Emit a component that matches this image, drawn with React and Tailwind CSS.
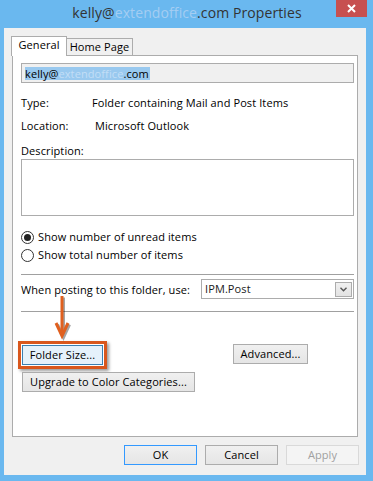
import React from 'react';

const font = { fontFamily: '"Open Sans", "Noto Sans", sans-serif' };

const Btn = ({ children, className = '' }) => (
  <div
    className={`h-[20px] flex items-center justify-center border border-[#acacac] bg-gradient-to-b from-[#f0f0f0] to-[#e5e5e5] text-[11px] tracking-[0.1px] text-[#000] whitespace-nowrap ${className}`}
  >
    {children}
  </div>
);

const Radio = ({ checked, label }) => (
  <div className="h-[16px] flex items-center gap-[4px]">
    <div className="w-[13px] h-[13px] rounded-full border border-[#333] bg-white flex items-center justify-center">
      {checked && <div className="w-[7px] h-[7px] rounded-full bg-[#222]" />}
    </div>
    <span className="leading-[16px]">{label}</span>
  </div>
);

export default function App() {
  return (
    <div className="w-[373px] h-[481px] bg-[#6ab8ef] flex flex-col overflow-hidden select-none" style={font}>
      {/* title bar */}
      <div className="relative h-[28px] flex items-center justify-center">
        <span className="text-[14px] tracking-[0.1px] text-[#333] leading-none pl-[1px] pb-[2px]">
          kelly@<span className="text-[#a4cdf2]">extendoffice</span>.com Properties
        </span>
        <div className="absolute right-[6px] top-0 w-[31px] h-[17px] bg-[#c75050] flex items-center justify-center">
          <svg width="9" height="9" viewBox="0 0 9 9">
            <path d="M1 1L8 8M8 1L1 8" stroke="#fff" strokeWidth="2" />
          </svg>
        </div>
      </div>

      {/* client */}
      <div className="relative flex-1 ml-[4px] mr-[7px] mb-[6px] bg-[#f0f0f0] flex flex-col text-[11px] tracking-[0.1px] text-[#000]">
        {/* tabs */}
        <div className="flex items-end pl-[7px] pt-[8px]">
          <div className="relative z-10 -mb-px w-[56px] h-[20px] bg-white border border-b-0 border-[#acacac] flex items-center justify-center pb-[2px]">
            General
          </div>
          <div className="w-[66px] h-[17px] bg-[#f0f0f0] border border-b-0 border-l-0 border-[#acacac] flex items-center justify-center">
            Home Page
          </div>
        </div>

        {/* panel */}
        <div className="ml-[8px] w-[346px] h-[382px] bg-white border border-[#acacac] pl-[8px] flex flex-col whitespace-nowrap">
          <div className="mt-[7px] w-[333px] h-[20px] bg-[#f0f0f0] border border-[#acacac] flex items-center pl-[3px]">
            <span className="bg-[#99c9ef] h-[13px] flex items-center leading-none pr-px">
              kelly@<span className="text-[#c2def6]">extendoffice</span>.com
            </span>
          </div>

          <div className="mt-[12px] h-[16px] flex items-center">
            <span className="w-[71px]">Type:</span>
            <span>Folder containing Mail and Post Items</span>
          </div>
          <div className="mt-[7px] h-[16px] flex items-center">
            <span className="w-[74px]">Location:</span>
            <span>Microsoft Outlook</span>
          </div>
          <div className="mt-[9px] h-[16px] flex items-center">Description:</div>
          <div className="w-[333px] h-[57px] border border-[#acacac] bg-white" />

          <div className="mt-[13px]">
            <Radio checked label="Show number of unread items" />
          </div>
          <div className="mt-[2px]">
            <Radio label="Show total number of items" />
          </div>

          <div className="mt-[11px] w-[333px] h-px bg-[#a0a0a0]" />

          <div className="mt-[4px] w-[333px] h-[20px] flex items-center justify-between">
            <span className="pt-[2px]">When posting to this folder, use:</span>
            <div className="w-[153px] h-[20px] border border-[#acacac] bg-white flex items-center justify-between pl-[3px] pr-px">
              <span className="text-[#1a1a1a]">IPM.Post</span>
              <div className="w-[17px] h-[15px] border border-[#acacac] bg-gradient-to-b from-[#f0f0f0] to-[#e3e3e3] flex items-center justify-center">
                <svg width="7" height="5" viewBox="0 0 7 5">
                  <path d="M0.5 0.8L3.5 3.8L6.5 0.8" fill="none" stroke="#555" strokeWidth="1.4" />
                </svg>
              </div>
            </div>
          </div>

          <div className="mt-[12px] w-[333px] h-px bg-[#a0a0a0]" />

          <div className="mt-[29px] flex items-start">
            <div className="-ml-[3px] border-[3px] border-[#d9571d] p-px shadow-[2px_2px_3px_rgba(0,0,0,0.4)]">
              <div className="w-[81px] h-[20px] border border-[#3c7fb1] bg-[#e5f1fb] flex items-center justify-center">
                Folder Size...
              </div>
            </div>
            <Btn className="ml-[126px] mt-[3px] w-[75px]">Advanced...</Btn>
          </div>
          <Btn className="ml-px mt-[3px] w-[173px]">Upgrade to Color Categories...</Btn>
        </div>

        {/* bottom buttons */}
        <div className="mt-[8px] flex justify-end gap-[8px] pr-[7px]">
          <Btn className="w-[73px] !border-[#3399ff]">OK</Btn>
          <Btn className="w-[73px]">Cancel</Btn>
          <div className="w-[73px] h-[20px] flex items-center justify-center border border-[#d9d9d9] bg-[#f4f4f4] text-[#a0a0a0]">
            Apply
          </div>
        </div>

        {/* annotation arrow */}
        <svg className="absolute left-[50px] top-[268px]" width="24" height="46" viewBox="0 0 24 46">
          <g transform="translate(1.5,1.5)" opacity="0.35">
            <path d="M8 0V36" stroke="#000" strokeWidth="3" />
            <path d="M2 27L8 40L14 27" fill="none" stroke="#000" strokeWidth="3" />
          </g>
          <path d="M8 0V36" stroke="#e0601f" strokeWidth="3" />
          <path d="M2 27L8 40L14 27" fill="none" stroke="#e0601f" strokeWidth="3" strokeLinejoin="miter" />
        </svg>
      </div>
    </div>
  );
}
